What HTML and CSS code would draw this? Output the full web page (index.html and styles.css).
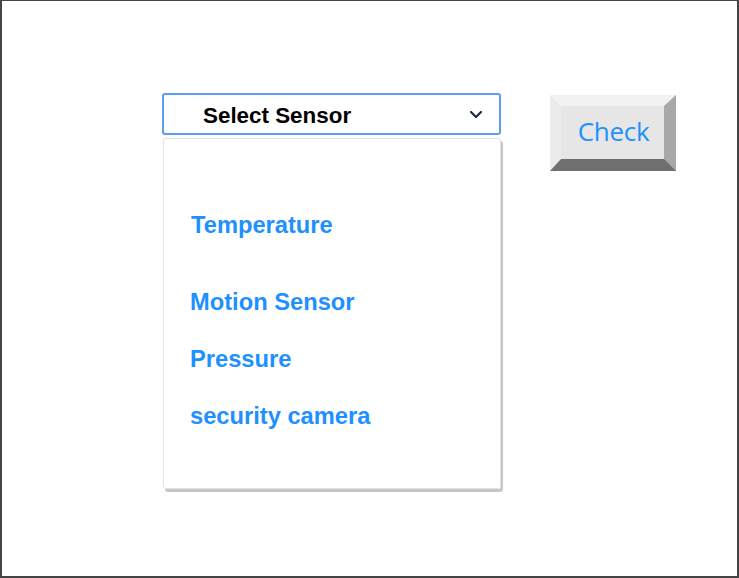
FILE: index.html
```html
<!DOCTYPE html>
<html>
<head>
<meta charset="utf-8">
<link rel="stylesheet" href="styles.css">
</head>
<body>
<div class="frame">
  <div class="row">
    <div class="picker">
      <div class="select">
        <span class="select-label">Select Sensor</span>
        <svg class="chevron" width="14" height="9" viewBox="0 0 14 9"><path d="M2 2 L7 7 L12 2" fill="none" stroke="#1f2a44" stroke-width="2.2" stroke-linecap="round" stroke-linejoin="round"/></svg>
      </div>
      <div class="menu">
        <div class="option first">Temperature</div>
        <div class="option">Motion Sensor</div>
        <div class="option">Pressure</div>
        <div class="option">security camera</div>
      </div>
    </div>
    <button class="check">Check</button>
  </div>
</div>
</body>
</html>
```
FILE: styles.css
```css
html, body {
  margin: 0;
  padding: 0;
  background: #fff;
}
.frame {
  box-sizing: border-box;
  width: 739px;
  height: 578px;
  border-style: solid;
  border-color: #444;
  border-width: 1px 2px 2px 2px;
  padding: 92px 0 0 160px;
  font-family: "Liberation Sans", Arial, sans-serif;
}
.row {
  display: flex;
  align-items: flex-start;
  gap: 49px;
}
.picker {
  display: flex;
  flex-direction: column;
  gap: 3px;
  width: 339px;
}
.select {
  box-sizing: border-box;
  height: 42px;
  border: 2px solid #5b9cf6;
  border-radius: 3px;
  display: flex;
  align-items: center;
  padding: 3px 16px 0 39px;
}
.select-label {
  flex: 1;
  font-size: 22.4px;
  font-weight: bold;
  color: #000;
}
.chevron {
  display: block;
  margin-top: -2px;
}
.menu {
  box-sizing: border-box;
  margin-left: 1px;
  width: 338px;
  height: 351px;
  border: 1px solid #e2e2e2;
  border-radius: 3px;
  box-shadow: 2px 3px 0 #c6c6c6;
  padding: 73px 0 0 26px;
  display: flex;
  flex-direction: column;
  gap: 30px;
}
.option {
  font-size: 23.7px;
  line-height: 27px;
  font-weight: bold;
  color: #1e90ff;
}
.option.first {
  margin-bottom: 20px;
  margin-left: 1px;
}
.check {
  box-sizing: border-box;
  margin-top: 2px;
  width: 126px;
  height: 76px;
  background: #e6e6e6;
  border-style: solid;
  border-width: 11px 12px 12px 11px;
  border-color: #f2f2f2 #a8a8a8 #6f6f6f #ebebeb;
  color: #1e90ff;
  font-family: "Open Sans", sans-serif;
  font-size: 26px;
  letter-spacing: -0.3px;
  padding: 0 0 3px 2px;
  line-height: 30px;
  cursor: pointer;
}
```
